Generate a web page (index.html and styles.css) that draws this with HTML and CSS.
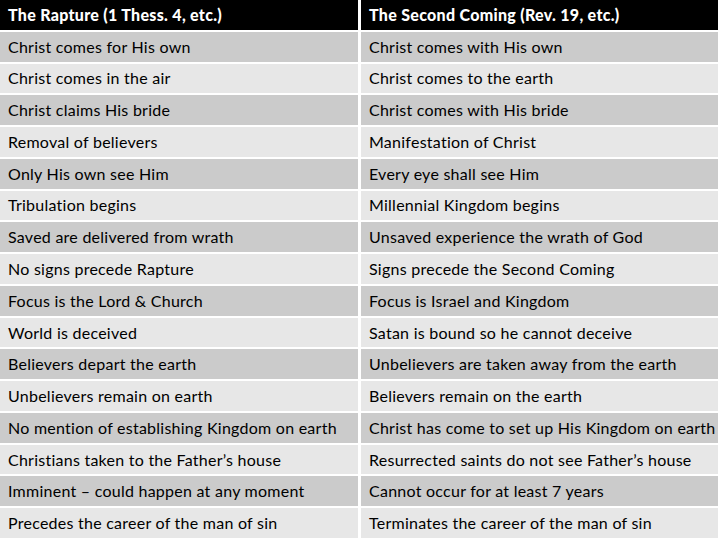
FILE: index.html
```html
<!DOCTYPE html>
<html>
<head>
<meta charset="utf-8">
<link rel="stylesheet" href="styles.css">
</head>
<body>
<div class="table">
  <div class="cell head">The Rapture (1 Thess. 4, etc.)</div>
  <div class="cell head">The Second Coming (Rev. 19, etc.)</div>
  <div class="cell dark">Christ comes for His own</div>
  <div class="cell dark">Christ comes with His own</div>
  <div class="cell light">Christ comes in the air</div>
  <div class="cell light">Christ comes to the earth</div>
  <div class="cell dark">Christ claims His bride</div>
  <div class="cell dark">Christ comes with His bride</div>
  <div class="cell light">Removal of believers</div>
  <div class="cell light">Manifestation of Christ</div>
  <div class="cell dark">Only His own see Him</div>
  <div class="cell dark">Every eye shall see Him</div>
  <div class="cell light">Tribulation begins</div>
  <div class="cell light">Millennial Kingdom begins</div>
  <div class="cell dark">Saved are delivered from wrath</div>
  <div class="cell dark">Unsaved experience the wrath of God</div>
  <div class="cell light">No signs precede Rapture</div>
  <div class="cell light">Signs precede the Second Coming</div>
  <div class="cell dark">Focus is the Lord &amp; Church</div>
  <div class="cell dark">Focus is Israel and Kingdom</div>
  <div class="cell light">World is deceived</div>
  <div class="cell light">Satan is bound so he cannot deceive</div>
  <div class="cell dark">Believers depart the earth</div>
  <div class="cell dark">Unbelievers are taken away from the earth</div>
  <div class="cell light">Unbelievers remain on earth</div>
  <div class="cell light">Believers remain on the earth</div>
  <div class="cell dark">No mention of establishing Kingdom on earth</div>
  <div class="cell dark">Christ has come to set up His Kingdom on earth</div>
  <div class="cell light">Christians taken to the Father’s house</div>
  <div class="cell light">Resurrected saints do not see Father’s house</div>
  <div class="cell dark">Imminent – could happen at any moment</div>
  <div class="cell dark">Cannot occur for at least 7 years</div>
  <div class="cell light">Precedes the career of the man of sin</div>
  <div class="cell light">Terminates the career of the man of sin</div>
</div>
</body>
</html>
```
FILE: styles.css
```css
html, body {
  margin: 0;
  padding: 0;
  background: #ffffff;
}
.table {
  display: grid;
  width: 718px;
  height: 538px;
  grid-template-columns: 358px 357px;
  grid-template-rows: repeat(17, 1fr);
  column-gap: 3px;
  row-gap: 2px;
  font-family: Lato, "Liberation Sans", sans-serif;
  font-size: 16px;
  letter-spacing: 0.25px;
  color: #000;
}
.cell {
  display: flex;
  align-items: center;
  padding-left: 8px;
  padding-bottom: 1px;
  white-space: nowrap;
  overflow: hidden;
}
.head {
  background: #000;
  color: #fff;
  font-weight: 900;
  letter-spacing: 0.3px;
}
.dark {
  background: #cbcbcb;
}
.light {
  background: #e7e7e7;
}
```
